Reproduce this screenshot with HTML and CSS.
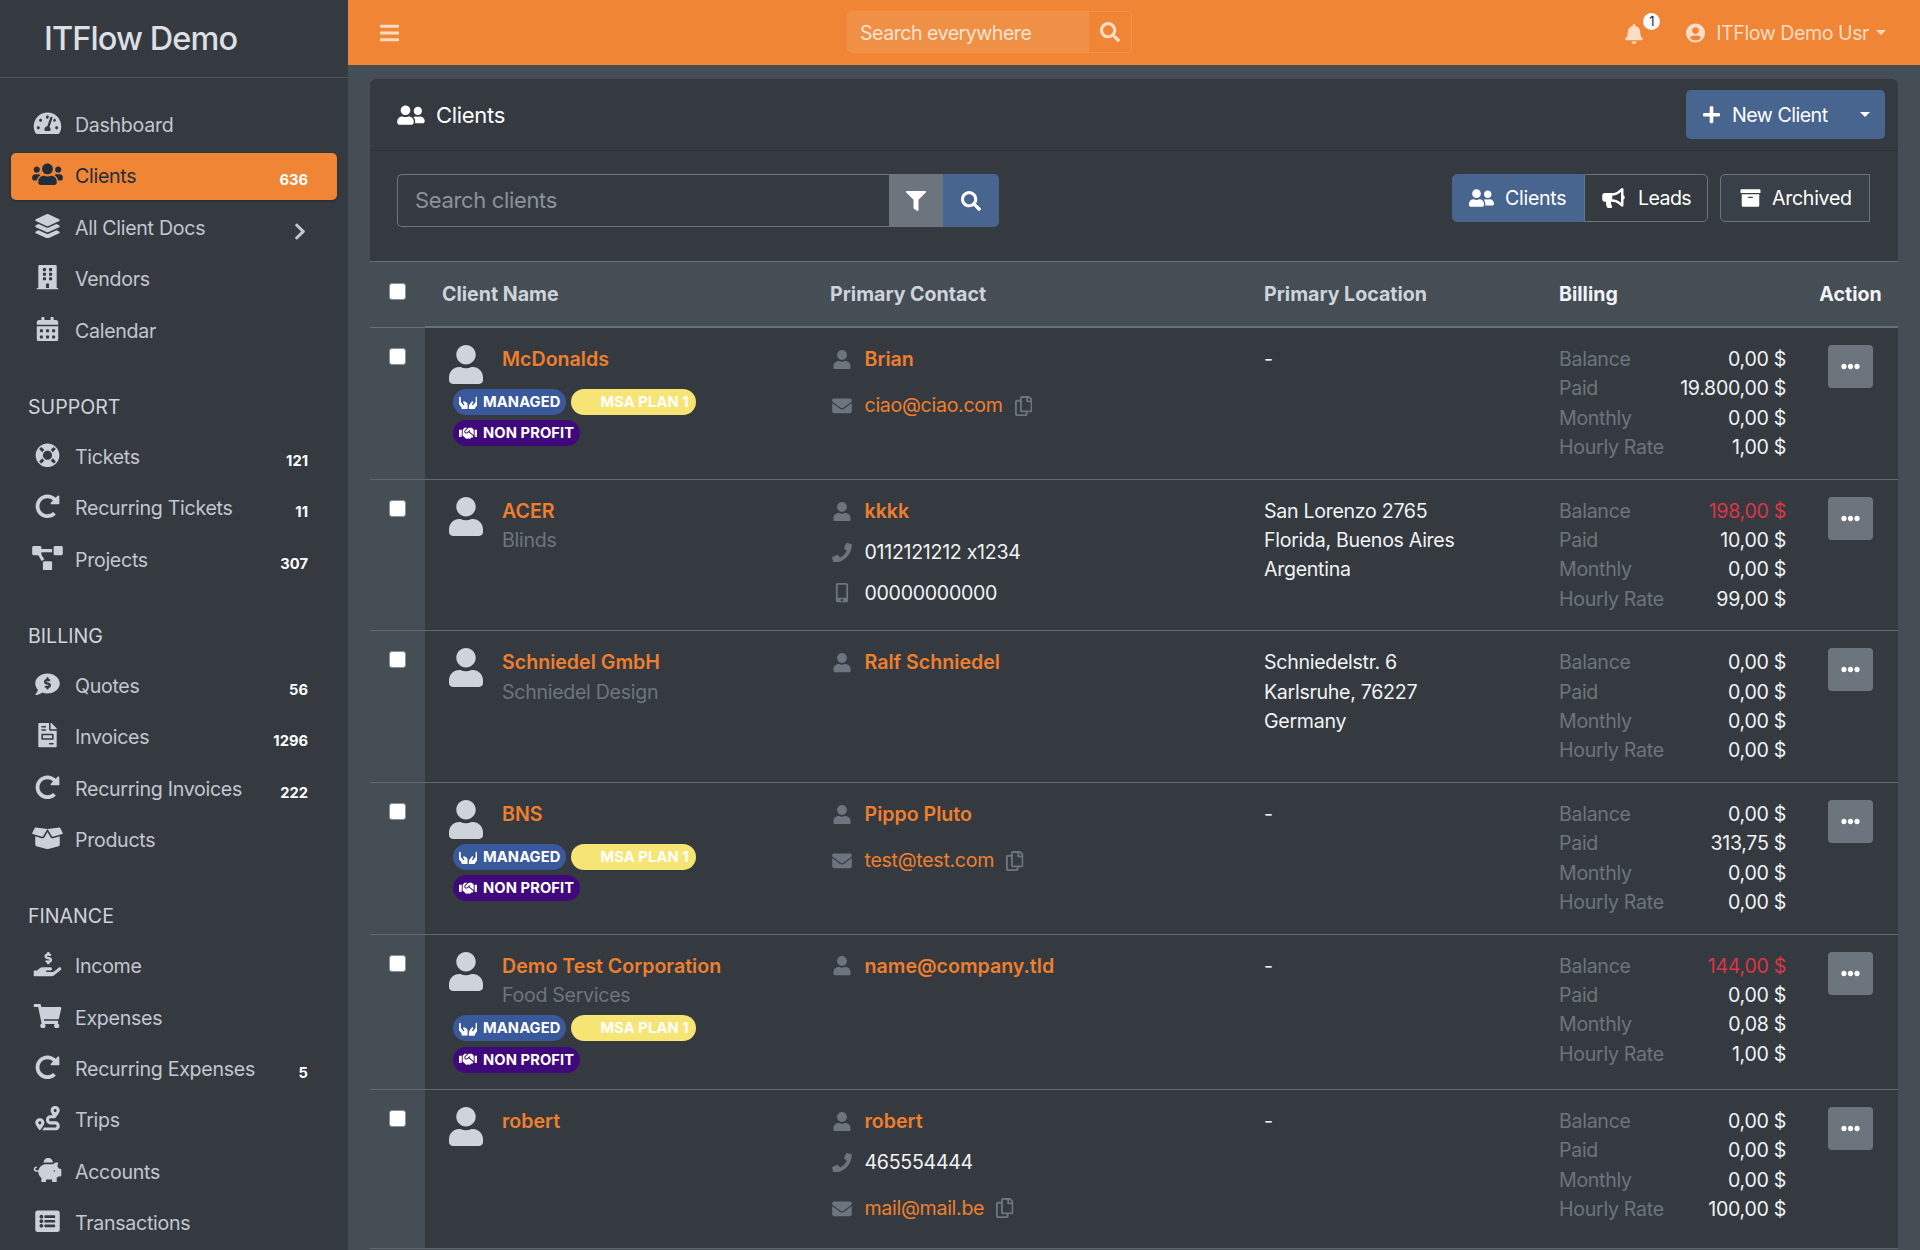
FILE: index.html
```html
<!DOCTYPE html>
<html lang="en">
<head>
    <meta charset="UTF-8">
    <meta name="viewport" content="width=device-width, initial-scale=1.0">
    <title>Clients | ITFlow Demo</title>
    <link rel="stylesheet" href="styles.css">
</head>
<body>
    <svg class="sprite" xmlns="http://www.w3.org/2000/svg">
        <symbol id="i-user" viewBox="0 0 448 512"><path d="M224 256c70.7 0 128-57.3 128-128S294.7 0 224 0 96 57.3 96 128s57.3 128 128 128zm89.6 32h-16.7c-22.2 10.2-46.9 16-72.9 16s-50.6-5.8-72.9-16h-16.7C60.2 288 0 348.2 0 422.4V464c0 26.5 21.5 48 48 48h352c26.5 0 48-21.5 48-48v-41.6c0-74.2-60.2-134.4-134.4-134.4z"/></symbol>
        <symbol id="i-search" viewBox="0 0 512 512"><path d="M505 442.7L405.3 343c-4.5-4.5-10.6-7-17-7H372c27.6-35.3 44-79.7 44-128C416 93.1 322.9 0 208 0S0 93.1 0 208s93.1 208 208 208c48.3 0 92.7-16.4 128-44v16.3c0 6.4 2.5 12.5 7 17l99.7 99.7c9.4 9.4 24.6 9.4 33.9 0l28.3-28.3c9.4-9.4 9.4-24.6.1-34zM208 336c-70.7 0-128-57.2-128-128 0-70.7 57.2-128 128-128 70.7 0 128 57.2 128 128 0 70.7-57.2 128-128 128z"/></symbol>
        <symbol id="i-bars" viewBox="0 0 448 512"><path d="M16 132h416c8.837 0 16-7.163 16-16V76c0-8.837-7.163-16-16-16H16C7.163 60 0 67.163 0 76v40c0 8.837 7.163 16 16 16zm0 160h416c8.837 0 16-7.163 16-16v-40c0-8.837-7.163-16-16-16H16c-8.837 0-16 7.163-16 16v40c0 8.837 7.163 16 16 16zm0 160h416c8.837 0 16-7.163 16-16v-40c0-8.837-7.163-16-16-16H16c-8.837 0-16 7.163-16 16v40c0 8.837 7.163 16 16 16z"/></symbol>
        <symbol id="i-bell" viewBox="0 0 448 512"><path d="M224 512c35.32 0 63.97-28.65 63.97-64H160.03c0 35.35 28.65 64 63.97 64zm215.39-149.71c-19.32-20.76-55.47-51.99-55.47-154.29 0-77.7-54.48-139.9-127.94-155.16V32c0-17.67-14.32-32-31.98-32s-31.98 14.33-31.98 32v20.84C118.56 68.1 64.08 130.3 64.08 208c0 102.3-36.15 133.53-55.47 154.29-6 6.45-8.66 14.16-8.61 21.71.11 16.4 12.98 32 32.1 32h383.8c19.12 0 32-15.6 32.1-32 .05-7.55-2.61-15.27-8.61-21.71z"/></symbol>
        <symbol id="i-user-circle" viewBox="0 0 496 512"><path d="M248 8C111 8 0 119 0 256s111 248 248 248 248-111 248-248S385 8 248 8zm0 96c48.6 0 88 39.4 88 88s-39.4 88-88 88-88-39.4-88-88 39.4-88 88-88zm0 344c-58.7 0-111.3-26.6-146.5-68.2 18.8-35.4 55.6-59.8 98.5-59.8 2.4 0 4.8.4 7.1 1.1 13 4.2 26.6 6.9 40.9 6.9 14.3 0 28-2.7 40.9-6.9 2.3-.7 4.7-1.1 7.1-1.1 42.9 0 79.7 24.4 98.5 59.8C359.3 421.4 306.7 448 248 448z"/></symbol>
        <symbol id="i-users" viewBox="0 0 640 512"><path d="M96 224c35.3 0 64-28.7 64-64s-28.7-64-64-64-64 28.7-64 64 28.7 64 64 64zm448 0c35.3 0 64-28.7 64-64s-28.7-64-64-64-64 28.7-64 64 28.7 64 64 64zm32 32h-64c-17.6 0-33.5 7.1-45.1 18.6 40.3 22.1 68.9 62 75.1 109.4h66c17.7 0 32-14.3 32-32v-32c0-35.3-28.7-64-64-64zm-256 0c61.9 0 112-50.1 112-112S381.9 32 320 32 208 82.1 208 144s50.1 112 112 112zm76.8 32h-8.3c-20.8 10-43.9 16-68.5 16s-47.6-6-68.5-16h-8.3C179.6 288 128 339.6 128 403.2V432c0 26.5 21.5 48 48 48h288c26.5 0 48-21.5 48-48v-28.8c0-63.6-51.6-115.2-115.2-115.2zm-223.7-13.4C161.5 263.1 145.6 256 128 256H64c-35.3 0-64 28.7-64 64v32c0 17.7 14.3 32 32 32h65.9c6.3-47.4 34.9-87.3 75.2-109.4z"/></symbol>
        <symbol id="i-user-friends" viewBox="0 0 640 512"><path d="M192 256c61.9 0 112-50.1 112-112S253.9 32 192 32 80 82.1 80 144s50.1 112 112 112zm76.8 32h-8.3c-20.8 10-43.9 16-68.5 16s-47.6-6-68.5-16h-8.3C51.6 288 0 339.6 0 403.2V432c0 26.5 21.5 48 48 48h288c26.5 0 48-21.5 48-48v-28.8c0-63.6-51.6-115.2-115.2-115.2zM480 256c53 0 96-43 96-96s-43-96-96-96-96 43-96 96 43 96 96 96zm48 32h-3.8c-13.9 4.8-28.6 8-44.2 8s-30.3-3.2-44.2-8H432c-20.4 0-39.2 5.9-55.7 15.4 24.4 26.3 39.7 61.2 39.7 99.8v38.4c0 2.2-.5 4.3-.6 6.4H592c26.5 0 48-21.5 48-48 0-61.9-50.1-112-112-112z"/></symbol>
        <symbol id="i-tachometer" viewBox="0 0 576 512"><path d="M288 32C128.94 32 0 160.94 0 320c0 52.8 14.25 102.26 39.06 144.8 5.61 9.62 16.3 15.2 27.44 15.2h443c11.14 0 21.83-5.58 27.44-15.2C561.75 422.26 576 372.8 576 320c0-159.06-128.94-288-288-288zm0 64c14.71 0 26.58 10.13 30.32 23.65-1.11 2.26-2.64 4.23-3.45 6.67l-9.22 27.67c-5.13 3.49-10.97 6.01-17.64 6.01-17.67 0-32-14.33-32-32S270.33 96 288 96zM96 384c-17.67 0-32-14.33-32-32s14.33-32 32-32 32 14.33 32 32-14.33 32-32 32zm48-160c-17.67 0-32-14.33-32-32s14.33-32 32-32 32 14.33 32 32-14.33 32-32 32zm246.77-72.41l-61.33 184C343.13 347.33 352 364.54 352 384c0 11.72-3.38 22.55-8.88 32H232.88c-5.5-9.45-8.88-20.28-8.88-32 0-33.94 26.5-61.43 59.9-63.59l61.34-184.01c4.17-12.56 17.73-19.45 30.36-15.17 12.57 4.19 19.35 17.79 15.17 30.36zm14.66 57.2l15.52-46.55c3.47-1.29 7.13-2.23 11.05-2.23 17.67 0 32 14.33 32 32s-14.33 32-32 32c-11.38-.01-20.89-6.28-26.57-15.22zM480 384c-17.67 0-32-14.33-32-32s14.33-32 32-32 32 14.33 32 32-14.33 32-32 32z"/></symbol>
        <symbol id="i-layers" viewBox="0 0 512 512"><path d="M12.41 148.02l232.94 105.67c6.8 3.09 14.49 3.09 21.29 0l232.94-105.67c16.55-7.51 16.55-32.52 0-40.03L266.65 2.31a25.607 25.607 0 0 0-21.29 0L12.41 107.98c-16.55 7.51-16.55 32.53 0 40.04zm487.18 88.28l-58.09-26.33-161.64 73.27c-7.56 3.43-15.59 5.17-23.86 5.17s-16.29-1.74-23.86-5.17L70.51 209.97l-58.1 26.33c-16.55 7.5-16.55 32.5 0 40l232.94 105.59c6.8 3.08 14.49 3.08 21.29 0L499.59 276.3c16.55-7.5 16.55-32.5 0-40zm0 127.8l-57.87-26.23-161.86 73.37c-7.56 3.43-15.59 5.17-23.86 5.17s-16.29-1.74-23.86-5.17L70.29 337.87 12.41 364.1c-16.55 7.5-16.55 32.5 0 40l232.94 105.59c6.8 3.08 14.49 3.08 21.29 0L499.59 404.1c16.55-7.5 16.55-32.5 0-40z"/></symbol>
        <symbol id="i-building" viewBox="0 0 448 512"><path d="M436 480h-20V24c0-13.255-10.745-24-24-24H56C42.745 0 32 10.745 32 24v456H12c-6.627 0-12 5.373-12 12v20h448v-20c0-6.627-5.373-12-12-12zM128 76c0-6.627 5.373-12 12-12h40c6.627 0 12 5.373 12 12v40c0 6.627-5.373 12-12 12h-40c-6.627 0-12-5.373-12-12V76zm0 96c0-6.627 5.373-12 12-12h40c6.627 0 12 5.373 12 12v40c0 6.627-5.373 12-12 12h-40c-6.627 0-12-5.373-12-12v-40zm52 148h-40c-6.627 0-12-5.373-12-12v-40c0-6.627 5.373-12 12-12h40c6.627 0 12 5.373 12 12v40c0 6.627-5.373 12-12 12zm76 160h-64v-84c0-6.627 5.373-12 12-12h40c6.627 0 12 5.373 12 12v84zm64-172c0 6.627-5.373 12-12 12h-40c-6.627 0-12-5.373-12-12v-40c0-6.627 5.373-12 12-12h40c6.627 0 12 5.373 12 12v40zm0-96c0 6.627-5.373 12-12 12h-40c-6.627 0-12-5.373-12-12v-40c0-6.627 5.373-12 12-12h40c6.627 0 12 5.373 12 12v40zm0-96c0 6.627-5.373 12-12 12h-40c-6.627 0-12-5.373-12-12V76c0-6.627 5.373-12 12-12h40c6.627 0 12 5.373 12 12v40z"/></symbol>
        <symbol id="i-calendar" viewBox="0 0 448 512"><path d="M0 464c0 26.5 21.5 48 48 48h352c26.5 0 48-21.5 48-48V192H0v272zm320-196c0-6.6 5.4-12 12-12h40c6.6 0 12 5.4 12 12v40c0 6.6-5.4 12-12 12h-40c-6.6 0-12-5.4-12-12v-40zm0 128c0-6.6 5.4-12 12-12h40c6.6 0 12 5.4 12 12v40c0 6.6-5.4 12-12 12h-40c-6.6 0-12-5.4-12-12v-40zM192 268c0-6.6 5.4-12 12-12h40c6.6 0 12 5.4 12 12v40c0 6.6-5.4 12-12 12h-40c-6.6 0-12-5.4-12-12v-40zm0 128c0-6.6 5.4-12 12-12h40c6.6 0 12 5.4 12 12v40c0 6.6-5.4 12-12 12h-40c-6.6 0-12-5.4-12-12v-40zM64 268c0-6.6 5.4-12 12-12h40c6.6 0 12 5.4 12 12v40c0 6.6-5.4 12-12 12H76c-6.6 0-12-5.4-12-12v-40zm0 128c0-6.6 5.4-12 12-12h40c6.6 0 12 5.4 12 12v40c0 6.6-5.4 12-12 12H76c-6.6 0-12-5.4-12-12v-40zM400 64h-48V16c0-8.8-7.2-16-16-16h-32c-8.8 0-16 7.2-16 16v48H160V16c0-8.8-7.2-16-16-16h-32c-8.8 0-16 7.2-16 16v48H48C21.5 64 0 85.5 0 112v48h448v-48c0-26.5-21.5-48-48-48z"/></symbol>
        <symbol id="i-chevron" viewBox="0 0 320 512"><path d="M285.476 272.971L91.132 467.314c-9.373 9.373-24.569 9.373-33.941 0l-22.667-22.667c-9.357-9.357-9.375-24.522-.04-33.901L188.505 256 34.484 101.255c-9.335-9.379-9.317-24.544.04-33.901l22.667-22.667c9.373-9.373 24.569-9.373 33.941 0L285.475 239.03c9.373 9.372 9.373 24.568.001 33.941z"/></symbol>
        <symbol id="i-lifering" viewBox="0 0 512 512"><path d="M256 8C119.033 8 8 119.033 8 256s111.033 248 248 248 248-111.033 248-248S392.967 8 256 8zm173.696 119.559l-63.399 63.399c-10.987-18.559-26.67-34.252-45.255-45.255l63.399-63.399a218.396 218.396 0 0 1 45.255 45.255zM256 352c-53.019 0-96-42.981-96-96s42.981-96 96-96 96 42.981 96 96-42.981 96-96 96zM127.559 82.304l63.399 63.399c-18.559 10.987-34.252 26.67-45.255 45.255l-63.399-63.399a218.372 218.372 0 0 1 45.255-45.255zM82.304 384.441l63.399-63.399c10.987 18.559 26.67 34.252 45.255 45.255l-63.399 63.399a218.396 218.396 0 0 1-45.255-45.255zm302.137 45.255l-63.399-63.399c18.559-10.987 34.252-26.67 45.255-45.255l63.399 63.399a218.403 218.403 0 0 1-45.255 45.255z"/></symbol>
        <symbol id="i-redo" viewBox="0 0 512 512"><path d="M256.455 8c66.269.119 126.437 26.233 170.859 68.685l35.715-35.715C478.149 25.851 504 36.559 504 57.941V192c0 13.255-10.745 24-24 24H345.941c-21.382 0-32.09-25.851-16.971-40.971l41.75-41.75c-30.864-28.899-70.801-44.907-113.23-45.273-92.398-.798-170.283 73.977-169.484 169.442C88.764 348.009 162.184 424 256 424c41.127 0 79.997-14.678 110.629-41.556 4.743-4.161 11.906-3.908 16.368.553l39.662 39.662c4.872 4.872 4.631 12.815-.482 17.433C378.202 479.813 319.926 504 256 504 119.034 504 8.001 392.967 8 256.002 7.999 119.193 119.646 7.755 256.455 8z"/></symbol>
        <symbol id="i-project" viewBox="0 0 640 512"><path d="M384 320H256c-17.67 0-32 14.33-32 32v128c0 17.67 14.33 32 32 32h128c17.67 0 32-14.33 32-32V352c0-17.67-14.33-32-32-32zM192 32c0-17.67-14.33-32-32-32H32C14.33 0 0 14.33 0 32v128c0 17.67 14.33 32 32 32h95.72l73.16 128.04C211.98 300.98 232.4 288 256 288h.28L192 175.51V128h224V64H192V32zM608 0H480c-17.67 0-32 14.33-32 32v128c0 17.67 14.33 32 32 32h128c17.67 0 32-14.33 32-32V32c0-17.67-14.33-32-32-32z"/></symbol>
        <symbol id="i-comment-dollar" viewBox="0 0 512 512"><path d="M256 32C114.62 32 0 125.12 0 240c0 49.56 21.41 95.01 57.02 130.74C44.46 421.05 2.7 465.97 2.2 466.5A7.995 7.995 0 0 0 8 480c66.26 0 115.99-31.75 140.6-51.38C181.29 440.93 217.59 448 256 448c141.38 0 256-93.12 256-208S397.38 32 256 32zm24 302.44V352c0 8.84-7.16 16-16 16h-16c-8.84 0-16-7.16-16-16v-17.73c-11.42-1.35-22.28-5.19-31.78-11.46-6.22-4.11-6.82-13.11-1.55-18.38l17.52-17.52c3.74-3.74 9.31-4.24 14.11-2.03 3.18 1.46 6.66 2.22 10.26 2.22h32.78c4.66 0 8.44-3.78 8.44-8.42 0-3.75-2.52-7.08-6.12-8.11l-50.07-14.3c-22.25-6.35-40.01-24.71-42.91-47.67-4.05-32.07 19.03-59.43 49.32-63.05V128c0-8.84 7.16-16 16-16h16c8.84 0 16 7.16 16 16v17.73c11.42 1.35 22.28 5.19 31.78 11.46 6.22 4.11 6.82 13.11 1.55 18.38l-17.52 17.52c-3.74 3.74-9.31 4.24-14.11 2.03a24.516 24.516 0 0 0-10.26-2.22h-32.78c-4.66 0-8.44 3.78-8.44 8.42 0 3.75 2.52 7.08 6.12 8.11l50.07 14.3c22.25 6.36 40.01 24.71 42.91 47.67 4.05 32.06-19.03 59.42-49.32 63.04z"/></symbol>
        <symbol id="i-invoice" viewBox="0 0 384 512"><path d="M288 256H96v64h192v-64zm89-151L279.1 7c-4.5-4.5-10.6-7-17-7H256v128h128v-6.1c0-6.3-2.5-12.4-7-16.9zm-153 31V0H24C10.7 0 0 10.7 0 24v464c0 13.3 10.7 24 24 24h336c13.3 0 24-10.7 24-24V160H248c-13.2 0-24-10.8-24-24zM64 72c0-4.42 3.58-8 8-8h80c4.42 0 8 3.58 8 8v16c0 4.42-3.58 8-8 8H72c-4.42 0-8-3.58-8-8V72zm0 64c0-4.42 3.58-8 8-8h80c4.42 0 8 3.58 8 8v16c0 4.42-3.58 8-8 8H72c-4.42 0-8-3.58-8-8v-16zm256 304c0 4.42-3.58 8-8 8h-80c-4.42 0-8-3.58-8-8v-16c0-4.42 3.58-8 8-8h80c4.42 0 8 3.58 8 8v16zm0-200v96c0 8.84-7.16 16-16 16H80c-8.84 0-16-7.16-16-16v-96c0-8.84 7.16-16 16-16h224c8.84 0 16 7.16 16 16z"/></symbol>
        <symbol id="i-box" viewBox="0 0 640 512"><path d="M425.7 256c-16.9 0-32.8-9-41.4-23.4L320 126l-64.2 106.6c-8.7 14.5-24.6 23.5-41.5 23.5-4.5 0-9-.6-13.3-1.9L64 215v178c0 14.7 10 27.5 24.2 31l216.2 54.1c10.2 2.5 20.9 2.5 31 0L551.8 424c14.2-3.6 24.2-16.4 24.2-31V215l-137 39.1c-4.3 1.3-8.8 1.9-13.3 1.9zm212.6-112.2L586.8 41c-3.1-6.2-9.8-9.8-16.7-8.9L320 64l91.7 152.1c3.8 6.3 11.4 9.3 18.5 7.3l197.9-56.5c9.9-2.9 14.7-13.9 10.2-23.1zM53.2 41L1.7 143.8c-4.6 9.2.3 20.2 10.1 23l197.9 56.5c7.1 2 14.7-1 18.5-7.3L320 64 69.8 32.1c-6.9-.8-13.5 2.7-16.6 8.9z"/></symbol>
        <symbol id="i-hand-usd" viewBox="0 0 576 512"><path d="M271.06,144.3l54.27,14.3a8.59,8.59,0,0,1,6.63,8.1c0,4.6-4.09,8.4-9.12,8.4h-35.6a30,30,0,0,1-11.19-2.2c-5.24-2.2-11.28-1.7-15.3,2l-19,17.5a11.68,11.68,0,0,0-2.25,2.66,11.42,11.42,0,0,0,3.88,15.74,83.77,83.77,0,0,0,34.51,11.5V240c0,8.8,7.83,16,17.37,16h17.37c9.55,0,17.38-7.2,17.38-16V222.4c32.93-3.6,57.84-31,53.5-63-3.15-23-22.46-41.3-46.56-47.7L282.68,97.4a8.59,8.59,0,0,1-6.63-8.1c0-4.6,4.09-8.4,9.12-8.4h35.6A30,30,0,0,1,332,83.1c5.23,2.2,11.28,1.7,15.3-2l19-17.5A11.31,11.31,0,0,0,368.47,61a11.43,11.43,0,0,0-3.84-15.78,83.82,83.82,0,0,0-34.52-11.5V16c0-8.8-7.82-16-17.37-16H295.37C285.82,0,278,7.2,278,16V33.6c-32.89,3.6-57.85,31-53.51,63C227.63,119.6,247,137.9,271.06,144.3ZM565.27,328.1c-11.8-10.7-30.2-10-42.6,0L430.27,402a63.64,63.64,0,0,1-40,14H272a16,16,0,0,1,0-32h78.29c15.9,0,30.71-10.9,33.25-26.6a31.2,31.2,0,0,0,.46-5.46A32,32,0,0,0,352,320H192a117.66,117.66,0,0,0-74.1,26.29L71.4,384H16A16,16,0,0,0,0,400v96a16,16,0,0,0,16,16H372.77a64,64,0,0,0,40-14L564,377a32,32,0,0,0,1.28-48.9Z"/></symbol>
        <symbol id="i-cart" viewBox="0 0 576 512"><path d="M528.12 301.319l47.273-208C578.806 78.301 567.391 64 551.99 64H159.208l-9.166-44.81C147.758 8.021 137.93 0 126.529 0H24C10.745 0 0 10.745 0 24v16c0 13.255 10.745 24 24 24h69.883l70.248 343.435C147.325 417.1 136 435.222 136 456c0 30.928 25.072 56 56 56s56-25.072 56-56c0-15.674-6.447-29.835-16.824-40h209.647C430.447 426.165 424 440.326 424 456c0 30.928 25.072 56 56 56s56-25.072 56-56c0-22.172-12.888-41.332-31.579-50.405l5.517-24.276c3.413-15.018-8.002-29.319-23.403-29.319H218.117l-6.545-32h293.145c11.206 0 20.92-7.754 23.403-18.681z"/></symbol>
        <symbol id="i-route" viewBox="0 0 512 512"><path d="M416 320h-96c-17.6 0-32-14.4-32-32s14.4-32 32-32h96s96-107 96-160-43-96-96-96-96 43-96 96c0 25.5 22.2 63.4 45.3 96H320c-52.9 0-96 43.1-96 96s43.1 96 96 96h96c17.6 0 32 14.4 32 32s-14.4 32-32 32H185.5c-16 24.8-33.8 47.7-47.3 64H416c52.9 0 96-43.1 96-96s-43.1-96-96-96zm0-256c17.7 0 32 14.3 32 32s-14.3 32-32 32-32-14.3-32-32 14.3-32 32-32zM96 256c-53 0-96 43-96 96s96 160 96 160 96-107 96-160-43-96-96-96zm0 128c-17.7 0-32-14.3-32-32s14.3-32 32-32 32 14.3 32 32-14.3 32-32 32z"/></symbol>
        <symbol id="i-piggy" viewBox="0 0 576 512"><path d="M560 224h-29.5c-8.8-20-21.6-37.7-37.4-52.5L512 96h-32c-29.4 0-55.4 13.5-73 34.3-7.6-1.1-15.1-2.3-23-2.3H256c-77.4 0-141.9 55-156.8 128H56c-14.8 0-26.5-13.5-23.5-28.8C34.7 215.8 45.4 208 57 208h1c3.3 0 6-2.7 6-6v-20c0-3.3-2.7-6-6-6-28.5 0-53.9 20.4-57.5 48.6C-3.9 258.8 22.7 288 56 288h40c0 52.2 25.4 98.1 64 127.3V496c0 8.8 7.2 16 16 16h64c8.8 0 16-7.2 16-16v-48h128v48c0 8.8 7.2 16 16 16h64c8.8 0 16-7.2 16-16v-80.9c11.8-8.9 22.3-19.4 31.3-31.1H560c8.8 0 16-7.2 16-16V240c0-8.8-7.2-16-16-16zm-128 64c-8.8 0-16-7.2-16-16s7.2-16 16-16 16 7.2 16 16-7.2 16-16 16zM256 96h128c5.4 0 10.7.4 15.9.8 0-.3.1-.5.1-.8 0-53-43-96-96-96s-96 43-96 96c0 2.1.5 4.1.6 6.2 15.2-3.9 31-6.2 47.4-6.2z"/></symbol>
        <symbol id="i-list" viewBox="0 0 512 512"><path d="M464 480H48c-26.51 0-48-21.49-48-48V80c0-26.51 21.49-48 48-48h416c26.51 0 48 21.49 48 48v352c0 26.51-21.49 48-48 48zM128 120c-22.091 0-40 17.909-40 40s17.909 40 40 40 40-17.909 40-40-17.909-40-40-40zm0 96c-22.091 0-40 17.909-40 40s17.909 40 40 40 40-17.909 40-40-17.909-40-40-40zm0 96c-22.091 0-40 17.909-40 40s17.909 40 40 40 40-17.909 40-40-17.909-40-40-40zm288-136v-32c0-6.627-5.373-12-12-12H204c-6.627 0-12 5.373-12 12v32c0 6.627 5.373 12 12 12h200c6.627 0 12-5.373 12-12zm0 96v-32c0-6.627-5.373-12-12-12H204c-6.627 0-12 5.373-12 12v32c0 6.627 5.373 12 12 12h200c6.627 0 12-5.373 12-12zm0 96v-32c0-6.627-5.373-12-12-12H204c-6.627 0-12 5.373-12 12v32c0 6.627 5.373 12 12 12h200c6.627 0 12-5.373 12-12z"/></symbol>
        <symbol id="i-filter" viewBox="0 0 512 512"><path d="M487.976 0H24.028C2.71 0-8.047 25.866 7.058 40.971L192 225.941V432c0 7.831 3.821 15.17 10.237 19.662l80 55.98C298.02 518.69 320 507.493 320 487.98V225.941l184.947-184.97C520.021 25.896 509.338 0 487.976 0z"/></symbol>
        <symbol id="i-plus" viewBox="0 0 448 512"><path d="M416 208H272V64c0-17.67-14.33-32-32-32h-32c-17.67 0-32 14.33-32 32v144H32c-17.67 0-32 14.33-32 32v32c0 17.67 14.33 32 32 32h144v144c0 17.67 14.33 32 32 32h32c17.67 0 32-14.33 32-32V304h144c17.67 0 32-14.33 32-32v-32c0-17.67-14.33-32-32-32z"/></symbol>
        <symbol id="i-bullhorn" viewBox="0 0 576 512"><path d="M576 240c0-23.63-12.95-44.04-32-55.12V32.01C544 23.26 537.02 0 512 0c-7.12 0-14.19 2.38-19.98 7.02l-85.03 68.03C364.28 109.19 310.66 128 256 128H64c-35.35 0-64 28.65-64 64v96c0 35.35 28.65 64 64 64h33.7c-1.39 10.48-2.18 21.14-2.18 32 0 39.77 9.26 77.35 25.56 110.94 5.19 10.69 16.52 17.06 28.4 17.06h74.28c26.05 0 41.69-29.84 25.9-50.56-16.4-21.52-26.15-48.36-26.15-77.44 0-11.11 1.62-21.79 4.41-32H256c54.66 0 108.28 18.81 150.98 52.95l85.03 68.03a32.023 32.023 0 0 0 19.98 7.02c24.92 0 32-22.78 32-32V295.13C563.05 284.04 576 263.63 576 240zm-96 141.42l-33.05-26.44C392.95 311.78 325.12 288 256 288v-96c69.12 0 136.95-23.78 190.95-66.98L480 98.58v282.84z"/></symbol>
        <symbol id="i-archive" viewBox="0 0 512 512"><path d="M32 448c0 17.7 14.3 32 32 32h384c17.7 0 32-14.3 32-32V160H32v288zm160-212c0-6.6 5.4-12 12-12h104c6.6 0 12 5.4 12 12v8c0 6.6-5.4 12-12 12H204c-6.6 0-12-5.4-12-12v-8zM480 32H32C14.3 32 0 46.3 0 64v48c0 8.8 7.2 16 16 16h480c8.8 0 16-7.2 16-16V64c0-17.7-14.3-32-32-32z"/></symbol>
        <symbol id="i-ellipsis" viewBox="0 0 512 512"><path d="M328 256c0 39.8-32.2 72-72 72s-72-32.2-72-72 32.2-72 72-72 72 32.2 72 72zm104-72c-39.8 0-72 32.2-72 72s32.2 72 72 72 72-32.2 72-72-32.2-72-72-72zm-352 0c-39.8 0-72 32.2-72 72s32.2 72 72 72 72-32.2 72-72-32.2-72-72-72z"/></symbol>
        <symbol id="i-envelope" viewBox="0 0 512 512"><path d="M502.3 190.8c3.9-3.1 9.7-.2 9.7 4.7V400c0 26.5-21.5 48-48 48H48c-26.5 0-48-21.5-48-48V195.6c0-5 5.7-7.8 9.7-4.7 22.4 17.4 52.1 39.5 154.1 113.6 21.1 15.4 56.7 47.8 92.2 47.6 35.7.3 72-32.8 92.3-47.6 102-74.1 131.6-96.3 154-113.7zM256 320c23.2.4 56.6-29.2 73.4-41.4 132.7-96.3 142.8-104.7 173.4-128.7 5.8-4.5 9.2-11.5 9.2-18.9v-19c0-26.5-21.5-48-48-48H48C21.5 64 0 85.5 0 112v19c0 7.4 3.4 14.3 9.2 18.9 30.6 23.9 40.7 32.4 173.4 128.7 16.8 12.2 50.2 41.8 73.4 41.4z"/></symbol>
        <symbol id="i-phone" viewBox="0 0 512 512"><path d="M493.4 24.6l-104-24c-11.3-2.6-22.9 3.3-27.5 13.9l-48 112c-4.2 9.8-1.4 21.3 6.9 28l60.6 49.6c-36 76.7-98.9 140.5-177.2 177.2l-49.6-60.6c-6.8-8.3-18.2-11.1-28-6.9l-112 48C3.9 366.5-2 378.1.6 389.4l24 104C27.1 504.2 36.7 512 48 512c256.1 0 464-207.5 464-464 0-11.2-7.7-20.9-18.6-23.4z"/></symbol>
        <symbol id="i-mobile" viewBox="0 0 320 512"><path d="M272 0H48C21.5 0 0 21.5 0 48v416c0 26.5 21.5 48 48 48h224c26.5 0 48-21.5 48-48V48c0-26.5-21.5-48-48-48zM160 480c-17.7 0-32-14.3-32-32s14.3-32 32-32 32 14.3 32 32-14.3 32-32 32zm112-108c0 6.6-5.4 12-12 12H60c-6.6 0-12-5.4-12-12V60c0-6.6 5.4-12 12-12h200c6.6 0 12 5.4 12 12v312z"/></symbol>
        <symbol id="i-copy" viewBox="0 0 448 512"><path d="M433.941 65.941l-51.882-51.882A48 48 0 0 0 348.118 0H176c-26.51 0-48 21.49-48 48v48H48c-26.51 0-48 21.49-48 48v320c0 26.51 21.49 48 48 48h224c26.51 0 48-21.49 48-48v-48h80c26.51 0 48-21.49 48-48V99.882a48 48 0 0 0-14.059-33.941zM266 464H54a6 6 0 0 1-6-6V150a6 6 0 0 1 6-6h74v224c0 26.51 21.49 48 48 48h96v42a6 6 0 0 1-6 6zm128-96H182a6 6 0 0 1-6-6V54a6 6 0 0 1 6-6h106v88c0 13.255 10.745 24 24 24h88v202a6 6 0 0 1-6 6zm6-256h-64V48h9.632c1.591 0 3.117.632 4.243 1.757l48.368 48.368a6 6 0 0 1 1.757 4.243V112z"/></symbol>
        <symbol id="i-hands" viewBox="0 0 640 512"><path transform="scale(.96 1)" d="M204.8 230.4c-10.6-14.1-30.7-17-44.8-6.4-14.1 10.6-17 30.7-6.4 44.8l38.1 50.8c4.8 6.4 4.1 15.3-1.5 20.9l-12.8 12.8c-6.7 6.7-17.6 6.2-23.6-1.1L64 244.4V96c0-17.7-14.3-32-32-32S0 78.3 0 96v218.4c0 7.5 2.6 14.7 7.3 20.5l77 92.4c7.7 9.3 11.5 21 11.5 33v25.7c0 13.3 10.7 24 24 24h168c13.3 0 24-10.7 24-24V352c0-28.8-9.8-56.8-27.2-80l-79.8-41.6z"/><path transform="translate(25.6 0) scale(.96 1)" d="M608 64c-17.7 0-32 14.3-32 32v148.4l-89.8 107.8c-6 7.2-17 7.7-23.6 1.1l-12.8-12.8c-5.6-5.6-6.3-14.5-1.5-20.9l38.1-50.8c10.6-14.1 7.7-34.2-6.4-44.8-14.1-10.6-34.2-7.7-44.8 6.4l-76.8 102.4c-17.4 23.2-27.2 51.2-27.2 80v96c0 13.3 10.7 24 24 24h168c13.3 0 24-10.7 24-24v-25.7c0-12 3.8-23.7 11.5-33l77-92.4c4.7-5.8 7.3-13 7.3-20.5V96c.4-17.7-13.9-32-31.6-32z"/></symbol>
        <symbol id="i-handshake" viewBox="0 0 640 512"><path d="M434.7 64h-85.9c-8 0-15.7 3-21.6 8.4l-98.3 90c-.1.1-.2.3-.3.4-16.6 15.6-16.3 40.5-2.1 56 12.7 13.9 39.4 17.6 56.1 2.7.1-.1.3-.1.4-.2l79.9-73.2c6.5-5.9 16.7-5.5 22.6 1 6 6.5 5.5 16.6-1 22.6l-26.1 23.9L504 313.8c2.9 2.4 5.5 5 7.9 7.7V128l-54.6-54.6c-5.9-6-14.1-9.4-22.6-9.4zM544 128.2v223.9c0 17.7 14.3 32 32 32h64V128.2h-96zm48 223.9c-8.8 0-16-7.2-16-16s7.2-16 16-16 16 7.2 16 16-7.2 16-16 16zM0 384h64c17.7 0 32-14.3 32-32V128.2H0V384zm48-63.9c8.8 0 16 7.2 16 16s-7.2 16-16 16-16-7.2-16-16c0-8.9 7.2-16 16-16zm435.9 18.6L334.6 217.5l-30 27.5c-29.7 27.1-75.2 24.5-101.7-4.4-26.9-29.4-24.8-74.9 4.4-101.7L289.1 64h-83.8c-8.5 0-16.6 3.4-22.6 9.4L128 128v223.9h18.3l90.5 81.9c27.4 22.3 67.7 18.1 90-9.3l.2-.2 17.9 15.5c15.9 13 39.4 10.5 52.3-5.4l31.4-38.6 5.4 4.4c13.7 11.1 33.9 9.1 45-4.7l9.5-11.7c11.2-13.8 9.1-33.9-4.6-45.1z"/></symbol>
    </svg>

    <aside class="sidebar">
        <div class="brand">ITFlow Demo</div>
        <nav class="nav">
            <a class="nav-link"><svg class="nav-ico"><use href="#i-tachometer"/></svg><span>Dashboard</span></a>
            <a class="nav-link active"><svg class="nav-ico"><use href="#i-users"/></svg><span>Clients</span><b class="count">636</b></a>
            <a class="nav-link"><svg class="nav-ico"><use href="#i-layers"/></svg><span>All Client Docs</span><svg class="nav-chevron"><use href="#i-chevron"/></svg></a>
            <a class="nav-link"><svg class="nav-ico"><use href="#i-building"/></svg><span>Vendors</span></a>
            <a class="nav-link"><svg class="nav-ico"><use href="#i-calendar"/></svg><span>Calendar</span></a>

            <div class="nav-header">SUPPORT</div>
            <a class="nav-link"><svg class="nav-ico"><use href="#i-lifering"/></svg><span>Tickets</span><b class="count">121</b></a>
            <a class="nav-link"><svg class="nav-ico"><use href="#i-redo"/></svg><span>Recurring Tickets</span><b class="count">11</b></a>
            <a class="nav-link"><svg class="nav-ico"><use href="#i-project"/></svg><span>Projects</span><b class="count">307</b></a>

            <div class="nav-header">BILLING</div>
            <a class="nav-link"><svg class="nav-ico"><use href="#i-comment-dollar"/></svg><span>Quotes</span><b class="count">56</b></a>
            <a class="nav-link"><svg class="nav-ico"><use href="#i-invoice"/></svg><span>Invoices</span><b class="count">1296</b></a>
            <a class="nav-link"><svg class="nav-ico"><use href="#i-redo"/></svg><span>Recurring Invoices</span><b class="count">222</b></a>
            <a class="nav-link"><svg class="nav-ico"><use href="#i-box"/></svg><span>Products</span></a>

            <div class="nav-header">FINANCE</div>
            <a class="nav-link"><svg class="nav-ico"><use href="#i-hand-usd"/></svg><span>Income</span></a>
            <a class="nav-link"><svg class="nav-ico"><use href="#i-cart"/></svg><span>Expenses</span></a>
            <a class="nav-link"><svg class="nav-ico"><use href="#i-redo"/></svg><span>Recurring Expenses</span><b class="count">5</b></a>
            <a class="nav-link"><svg class="nav-ico"><use href="#i-route"/></svg><span>Trips</span></a>
            <a class="nav-link"><svg class="nav-ico"><use href="#i-piggy"/></svg><span>Accounts</span></a>
            <a class="nav-link"><svg class="nav-ico"><use href="#i-list"/></svg><span>Transactions</span></a>
        </nav>
    </aside>

    <div class="wrapper">
        <header class="topbar">
            <svg class="top-bars"><use href="#i-bars"/></svg>
            <div class="top-search">
                <input class="top-input" type="text" placeholder="Search everywhere">
                <button class="top-search-btn"><svg class="top-search-ico"><use href="#i-search"/></svg></button>
            </div>
            <div class="top-right">
                <div class="bell">
                    <svg class="bell-ico"><use href="#i-bell"/></svg>
                    <span class="bell-badge">1</span>
                </div>
                <svg class="user-ico"><use href="#i-user-circle"/></svg>
                <span class="user-name">ITFlow Demo Usr</span>
                <i class="caret"></i>
            </div>
        </header>

        <main class="content">
            <section class="card">
                <div class="card-header">
                    <h3 class="card-title"><svg class="title-ico"><use href="#i-user-friends"/></svg><span class="title-text">Clients</span></h3>
                    <button class="btn-new">
                        <svg class="plus-ico"><use href="#i-plus"/></svg>
                        <span class="btn-new-text">New Client</span>
                        <i class="caret caret-new"></i>
                    </button>
                </div>

                <div class="toolbar">
                    <div class="search-group">
                        <input class="search-input" type="text" placeholder="Search clients">
                        <button class="search-btn filter"><svg class="search-ico"><use href="#i-filter"/></svg></button>
                        <button class="search-btn go"><svg class="search-ico"><use href="#i-search"/></svg></button>
                    </div>
                    <div class="tabs">
                        <a class="tab tab-active"><svg class="tab-ico"><use href="#i-user-friends"/></svg><span class="tab-text">Clients</span></a>
                        <a class="tab tab-leads"><svg class="tab-ico"><use href="#i-bullhorn"/></svg><span class="tab-text">Leads</span></a>
                        <a class="tab tab-archived"><svg class="tab-ico"><use href="#i-archive"/></svg><span class="tab-text">Archived</span></a>
                    </div>
                </div>

                <table class="clients">
                    <colgroup>
                        <col class="col-check"><col class="col-client"><col class="col-contact"><col class="col-location"><col class="col-billing"><col class="col-action">
                    </colgroup>
                    <thead>
                        <tr>
                            <th class="cell-check"><input class="check" type="checkbox"></th>
                            <th class="sort">Client Name</th>
                            <th class="sort">Primary Contact</th>
                            <th class="sort">Primary Location</th>
                            <th>Billing</th>
                            <th class="th-action">Action</th>
                        </tr>
                    </thead>
                    <tbody>
                        <tr>
                            <td class="cell-check"><input class="check" type="checkbox"></td>
                            <td>
                                <div class="client-head">
                                    <svg class="avatar"><use href="#i-user"/></svg>
                                    <div><a class="link-name">McDonalds</a></div>
                                </div>
                                <div class="tags">
                                    <span class="tag tag-managed"><svg class="tag-ico"><use href="#i-hands"/></svg>MANAGED</span>
                                    <span class="tag tag-msa"><span class="tag-blank"></span>MSA PLAN 1</span>
                                    <span class="tag tag-nonprofit"><svg class="tag-ico"><use href="#i-handshake"/></svg>NON PROFIT</span>
                                </div>
                            </td>
                            <td>
                                <div class="contact"><svg class="contact-ico"><use href="#i-user"/></svg><a class="link-name">Brian</a></div>
                                <div class="contact contact-mail"><svg class="contact-ico"><use href="#i-envelope"/></svg><a class="link-mail">ciao@ciao.com</a><svg class="copy-ico"><use href="#i-copy"/></svg></div>
                            </td>
                            <td>-</td>
                            <td>
                                <div class="billing">
                                    <span class="bill-label">Balance</span><span class="bill-value">0,00 $</span>
                                    <span class="bill-label">Paid</span><span class="bill-value">19.800,00 $</span>
                                    <span class="bill-label">Monthly</span><span class="bill-value">0,00 $</span>
                                    <span class="bill-label">Hourly Rate</span><span class="bill-value">1,00 $</span>
                                </div>
                            </td>
                            <td class="cell-action"><button class="btn-more"><svg class="more-ico"><use href="#i-ellipsis"/></svg></button></td>
                        </tr>
                        <tr>
                            <td class="cell-check"><input class="check" type="checkbox"></td>
                            <td>
                                <div class="client-head">
                                    <svg class="avatar"><use href="#i-user"/></svg>
                                    <div><a class="link-name">ACER</a><div class="client-sub">Blinds</div></div>
                                </div>
                            </td>
                            <td>
                                <div class="contact"><svg class="contact-ico"><use href="#i-user"/></svg><a class="link-name">kkkk</a></div>
                                <div class="contact"><svg class="contact-ico"><use href="#i-phone"/></svg>0112121212 x1234</div>
                                <div class="contact"><svg class="contact-ico"><use href="#i-mobile"/></svg>00000000000</div>
                            </td>
                            <td>San Lorenzo 2765<br>Florida, Buenos Aires<br>Argentina</td>
                            <td>
                                <div class="billing">
                                    <span class="bill-label">Balance</span><span class="bill-value bill-due">198,00 $</span>
                                    <span class="bill-label">Paid</span><span class="bill-value">10,00 $</span>
                                    <span class="bill-label">Monthly</span><span class="bill-value">0,00 $</span>
                                    <span class="bill-label">Hourly Rate</span><span class="bill-value">99,00 $</span>
                                </div>
                            </td>
                            <td class="cell-action"><button class="btn-more"><svg class="more-ico"><use href="#i-ellipsis"/></svg></button></td>
                        </tr>
                        <tr>
                            <td class="cell-check"><input class="check" type="checkbox"></td>
                            <td>
                                <div class="client-head">
                                    <svg class="avatar"><use href="#i-user"/></svg>
                                    <div><a class="link-name">Schniedel GmbH</a><div class="client-sub">Schniedel Design</div></div>
                                </div>
                            </td>
                            <td>
                                <div class="contact"><svg class="contact-ico"><use href="#i-user"/></svg><a class="link-name">Ralf Schniedel</a></div>
                            </td>
                            <td>Schniedelstr. 6<br>Karlsruhe, 76227<br>Germany</td>
                            <td>
                                <div class="billing">
                                    <span class="bill-label">Balance</span><span class="bill-value">0,00 $</span>
                                    <span class="bill-label">Paid</span><span class="bill-value">0,00 $</span>
                                    <span class="bill-label">Monthly</span><span class="bill-value">0,00 $</span>
                                    <span class="bill-label">Hourly Rate</span><span class="bill-value">0,00 $</span>
                                </div>
                            </td>
                            <td class="cell-action"><button class="btn-more"><svg class="more-ico"><use href="#i-ellipsis"/></svg></button></td>
                        </tr>
                        <tr>
                            <td class="cell-check"><input class="check" type="checkbox"></td>
                            <td>
                                <div class="client-head">
                                    <svg class="avatar"><use href="#i-user"/></svg>
                                    <div><a class="link-name">BNS</a></div>
                                </div>
                                <div class="tags">
                                    <span class="tag tag-managed"><svg class="tag-ico"><use href="#i-hands"/></svg>MANAGED</span>
                                    <span class="tag tag-msa"><span class="tag-blank"></span>MSA PLAN 1</span>
                                    <span class="tag tag-nonprofit"><svg class="tag-ico"><use href="#i-handshake"/></svg>NON PROFIT</span>
                                </div>
                            </td>
                            <td>
                                <div class="contact"><svg class="contact-ico"><use href="#i-user"/></svg><a class="link-name">Pippo Pluto</a></div>
                                <div class="contact contact-mail"><svg class="contact-ico"><use href="#i-envelope"/></svg><a class="link-mail">test@test.com</a><svg class="copy-ico"><use href="#i-copy"/></svg></div>
                            </td>
                            <td>-</td>
                            <td>
                                <div class="billing">
                                    <span class="bill-label">Balance</span><span class="bill-value">0,00 $</span>
                                    <span class="bill-label">Paid</span><span class="bill-value">313,75 $</span>
                                    <span class="bill-label">Monthly</span><span class="bill-value">0,00 $</span>
                                    <span class="bill-label">Hourly Rate</span><span class="bill-value">0,00 $</span>
                                </div>
                            </td>
                            <td class="cell-action"><button class="btn-more"><svg class="more-ico"><use href="#i-ellipsis"/></svg></button></td>
                        </tr>
                        <tr>
                            <td class="cell-check"><input class="check" type="checkbox"></td>
                            <td>
                                <div class="client-head">
                                    <svg class="avatar"><use href="#i-user"/></svg>
                                    <div><a class="link-name">Demo Test Corporation</a><div class="client-sub">Food Services</div></div>
                                </div>
                                <div class="tags">
                                    <span class="tag tag-managed"><svg class="tag-ico"><use href="#i-hands"/></svg>MANAGED</span>
                                    <span class="tag tag-msa"><span class="tag-blank"></span>MSA PLAN 1</span>
                                    <span class="tag tag-nonprofit"><svg class="tag-ico"><use href="#i-handshake"/></svg>NON PROFIT</span>
                                </div>
                            </td>
                            <td>
                                <div class="contact"><svg class="contact-ico"><use href="#i-user"/></svg><a class="link-name">name@company.tld</a></div>
                            </td>
                            <td>-</td>
                            <td>
                                <div class="billing">
                                    <span class="bill-label">Balance</span><span class="bill-value bill-due">144,00 $</span>
                                    <span class="bill-label">Paid</span><span class="bill-value">0,00 $</span>
                                    <span class="bill-label">Monthly</span><span class="bill-value">0,08 $</span>
                                    <span class="bill-label">Hourly Rate</span><span class="bill-value">1,00 $</span>
                                </div>
                            </td>
                            <td class="cell-action"><button class="btn-more"><svg class="more-ico"><use href="#i-ellipsis"/></svg></button></td>
                        </tr>
                        <tr>
                            <td class="cell-check"><input class="check" type="checkbox"></td>
                            <td>
                                <div class="client-head">
                                    <svg class="avatar"><use href="#i-user"/></svg>
                                    <div><a class="link-name">robert</a></div>
                                </div>
                            </td>
                            <td>
                                <div class="contact"><svg class="contact-ico"><use href="#i-user"/></svg><a class="link-name">robert</a></div>
                                <div class="contact"><svg class="contact-ico"><use href="#i-phone"/></svg>465554444</div>
                                <div class="contact contact-mail"><svg class="contact-ico"><use href="#i-envelope"/></svg><a class="link-mail">mail@mail.be</a><svg class="copy-ico"><use href="#i-copy"/></svg></div>
                            </td>
                            <td>-</td>
                            <td>
                                <div class="billing">
                                    <span class="bill-label">Balance</span><span class="bill-value">0,00 $</span>
                                    <span class="bill-label">Paid</span><span class="bill-value">0,00 $</span>
                                    <span class="bill-label">Monthly</span><span class="bill-value">0,00 $</span>
                                    <span class="bill-label">Hourly Rate</span><span class="bill-value">100,00 $</span>
                                </div>
                            </td>
                            <td class="cell-action"><button class="btn-more"><svg class="more-ico"><use href="#i-ellipsis"/></svg></button></td>
                        </tr>
                    </tbody>
                </table>
            </section>
        </main>
    </div>
</body>
</html>
```

FILE: styles.css
```css
* {
    box-sizing: border-box;
}
html, body {
    height: 100%;
}
body {
    margin: 0;
    display: flex;
    overflow: hidden;
    background-color: #454d55;
    color: #f1f3f5;
    font-family: Inter, "Liberation Sans", sans-serif;
    font-size: 19.6px;
    line-height: 29.4px;
    letter-spacing: -.3px;
}
svg {
    display: block;
    fill: currentColor;
    flex-shrink: 0;
}
.sprite {
    display: none;
}
button {
    border: none;
    padding: 0;
    font: inherit;
    letter-spacing: inherit;
    color: inherit;
}

/* sidebar */
.sidebar {
    width: 348px;
    height: 100%;
    flex-shrink: 0;
    overflow: hidden;
    background-color: #343a40;
    color: #c2c7d0;
}
.brand {
    height: 78px;
    padding: 15px 0 0 44px;
    border-bottom: 1px solid #4b545c;
    font-size: 32.5px;
    line-height: 48px;
    font-weight: 500;
    letter-spacing: -.9px;
    color: #dcdfe3;
}
.nav {
    padding: 23.3px 11px 0;
}
.nav-link {
    display: flex;
    align-items: center;
    height: 47px;
    margin-bottom: 4.4px;
    padding: 0 29px 0 21px;
    border-radius: 5px;
}
.nav-link span {
    padding-top: 2px;
}
.nav-link.active {
    background-color: #ef8535;
    color: #1f2d3d;
    box-shadow: 0 1px 3px rgba(0, 0, 0, .3);
}
.nav-ico {
    width: 31px;
    height: 24.5px;
    margin: -3px 12px 0 0;
    color: #ccd1d9;
}
.nav-link.active .nav-ico {
    color: #1f2d3d;
}
.count {
    margin: 10px 0 0 auto;
    font-size: 14.7px;
    font-weight: 700;
    letter-spacing: 0;
    color: #fff;
}
.nav-chevron {
    width: 12px;
    height: 19px;
    margin: 8px 2px 0 auto;
}
.nav-header {
    padding: 34.5px 0 10.9px 17px;
    letter-spacing: 0;
    color: #d0d4db;
}

/* top bar */
.wrapper {
    flex: 1;
    min-width: 0;
}
.topbar {
    display: flex;
    align-items: center;
    height: 65px;
    padding: 0 34px 0 32px;
    background-color: #ef8535;
    color: #fbdcc4;
}
.top-bars {
    width: 19px;
    height: 22px;
}
.top-search {
    display: flex;
    height: 42px;
    margin: -1px 0 0 448px;
    border: 1px solid rgba(255, 255, 255, .12);
    border-radius: 5px;
}
.top-input {
    width: 240px;
    padding: 3px 12px 0;
    border: none;
    border-radius: 4px 0 0 4px;
    background-color: rgba(255, 255, 255, .09);
    font: inherit;
    letter-spacing: -.5px;
    color: #fff;
    outline: none;
}
.top-input::placeholder {
    color: #fbe3d1;
}
.top-search-btn {
    display: flex;
    align-items: center;
    justify-content: center;
    width: 43px;
    border-left: 1px solid rgba(255, 255, 255, .12);
    background: none;
}
.top-search-ico {
    width: 20px;
    height: 20px;
    color: #fbdcc4;
}
.top-right {
    display: flex;
    align-items: center;
    margin-left: auto;
}
.bell {
    position: relative;
    margin-right: 43px;
}
.bell-ico {
    width: 18px;
    height: 20px;
    margin-top: 2px;
}
.bell-badge {
    position: absolute;
    top: -9px;
    left: 18px;
    width: 17px;
    height: 17px;
    border-radius: 50%;
    background-color: #f8f9fa;
    color: #1f2d3d;
    font-size: 13px;
    line-height: 17px;
    text-align: center;
}
.user-ico {
    width: 19px;
    height: 20px;
    margin-right: 11px;
}
.user-name {
    padding-top: 2px;
    letter-spacing: -.45px;
}
.caret {
    width: 0;
    height: 0;
    margin-left: 7px;
    border-top: 5.5px solid currentColor;
    border-left: 5.5px solid transparent;
    border-right: 5.5px solid transparent;
}

/* card */
.content {
    padding: 14px 22px 0;
}
.card {
    border-radius: 6px 6px 0 0;
    background-color: #343a40;
}
.card-header {
    display: flex;
    align-items: center;
    justify-content: space-between;
    height: 72px;
    padding: 0 13px 0 27px;
    border-bottom: 1px solid #2d3237;
}
.card-title {
    display: flex;
    align-items: center;
    margin: 0;
    font-size: 22px;
    font-weight: 400;
    color: #fff;
}
.title-ico {
    width: 28px;
    height: 22px;
    margin-right: 11px;
}
.title-text,
.btn-new-text,
.tab-text {
    padding-top: 2px;
}
.btn-new {
    display: flex;
    align-items: center;
    width: 199px;
    height: 49px;
    padding: 0 15px 0 17px;
    border-radius: 5px;
    background-color: #47658f;
    letter-spacing: -.5px;
    color: #fff;
}
.plus-ico {
    width: 17px;
    height: 19.6px;
    margin-right: 12px;
}
.caret-new {
    margin-left: auto;
}

/* search row */
.toolbar {
    display: flex;
    align-items: flex-start;
    justify-content: space-between;
    height: 111px;
    padding: 23px 28px 0 27px;
    border-bottom: 1px solid #6b7077;
}
.search-group {
    display: flex;
    height: 53px;
}
.search-input {
    width: 492px;
    padding: 0 17px;
    border: 1.5px solid #6c757d;
    border-right: none;
    border-radius: 5px 0 0 5px;
    background-color: #343a40;
    font: inherit;
    font-size: 22px;
    letter-spacing: -.35px;
    color: #fff;
    outline: none;
}
.search-input::placeholder {
    color: #8b9299;
}
.search-btn {
    display: flex;
    align-items: center;
    justify-content: center;
    width: 54px;
    color: #fff;
}
.search-btn.filter {
    background-color: #6c757d;
}
.search-btn.go {
    width: 56px;
    border-radius: 0 5px 5px 0;
    background-color: #47658f;
}
.search-ico {
    width: 20px;
    height: 20px;
}
.tabs {
    display: flex;
}
.tab {
    display: flex;
    align-items: center;
    height: 48px;
    border: 1.5px solid #6c757d;
    color: #fff;
}
.tab-ico {
    width: 25px;
    height: 20px;
    margin-right: 11px;
}
.tab-active {
    width: 132px;
    padding-left: 16px;
    border-color: #47658f;
    border-radius: 5px 0 0 5px;
    background-color: #47658f;
}
.tab-leads {
    width: 124px;
    padding-left: 16px;
    border-radius: 0 5px 5px 0;
    letter-spacing: -.6px;
}
.tab-leads .tab-ico {
    margin-right: 12px;
}
.tab-archived {
    width: 150px;
    margin-left: 12px;
    padding-left: 17px;
    border-radius: 5px 0 0 5px;
    background-color: #3a4047;
}
.tab-archived .tab-ico {
    margin-right: 9px;
}

/* table */
.clients {
    width: 100%;
    table-layout: fixed;
    border-collapse: collapse;
}
.col-check { width: 55px; }
.col-client { width: 388px; }
.col-contact { width: 434px; }
.col-location { width: 295px; }
.col-billing { width: 261px; }
.col-action { width: 95px; }
th {
    height: 65px;
    padding: 2px 17px 0;
    border-bottom: 2px solid #6b7077;
    background-color: #454d55;
    text-align: left;
    font-weight: 700;
    letter-spacing: 0;
    color: #f1f3f5;
}
th.sort {
    color: #ced4da;
}
th.cell-check {
    padding: 0 0 5px;
    border-bottom-width: 1px;
}
.th-action {
    text-align: center;
    padding: 2px 0 0;
}
td {
    padding: 17px 17px 16px;
    border-bottom: 1px solid #62676e;
    vertical-align: top;
}
td.cell-check {
    padding: 20px 0 0 19px;
    background-color: #454d55;
}
.check {
    appearance: none;
    display: block;
    width: 17px;
    height: 17px;
    margin: 0;
    border: 1px solid #8a9097;
    border-radius: 3px;
    background-color: #fff;
}
th .check {
    margin-left: 19px;
}

.client-head {
    display: flex;
    margin-bottom: 5px;
}
.avatar {
    width: 34px;
    height: 39px;
    margin: 0 19px 0 7px;
    color: #ced4da;
}
.link-name {
    font-weight: 600;
    letter-spacing: 0;
    color: #ef7f2d;
}
.client-sub {
    color: #6c757d;
}
.tags {
    display: flex;
    flex-wrap: wrap;
    gap: 5.4px 5px;
    margin-left: 11px;
    width: 260px;
}
.tag {
    display: inline-flex;
    align-items: center;
    height: 26px;
    padding: 0 6px 0 6px;
    border-radius: 13px;
    font-size: 14.7px;
    line-height: 26px;
    font-weight: 700;
    letter-spacing: .1px;
    color: #fff;
}
.tag-ico {
    width: 18.4px;
    height: 14.7px;
    margin-right: 5.6px;
}
.tag-blank {
    width: 23px;
}
.tag-managed {
    background-color: #39599c;
}
.tag-msa {
    padding-right: 7px;
    background-color: #f6e574;
}
.tag-nonprofit {
    background-color: #40097b;
}

.contact {
    display: flex;
    align-items: center;
    height: 29.4px;
    margin-bottom: 11.6px;
}
.contact:last-child {
    margin-bottom: 0;
}
.contact-mail:last-child {
    height: 39.4px;
    margin-bottom: 4px;
}
.contact-ico {
    width: 20px;
    height: 19.6px;
    margin: 0 13px 0 1.5px;
    color: #6c757d;
}
.link-mail {
    color: #ef7f2d;
}
.copy-ico {
    width: 17.5px;
    height: 20px;
    margin-left: 12px;
    color: #6c757d;
}

.billing {
    display: grid;
    grid-template-columns: 1fr auto;
}
.bill-label {
    color: #6c757d;
}
.bill-value {
    text-align: right;
    color: #f1f3f5;
}
.bill-due {
    color: #dc3545;
}
td.cell-action {
    padding: 17px 0 0;
}
.btn-more {
    display: flex;
    align-items: center;
    justify-content: center;
    width: 45px;
    height: 43px;
    margin: 0 auto;
    border-radius: 4px;
    background-color: #6c757d;
    color: #fff;
}
.more-ico {
    width: 19px;
    height: 19px;
}
```
